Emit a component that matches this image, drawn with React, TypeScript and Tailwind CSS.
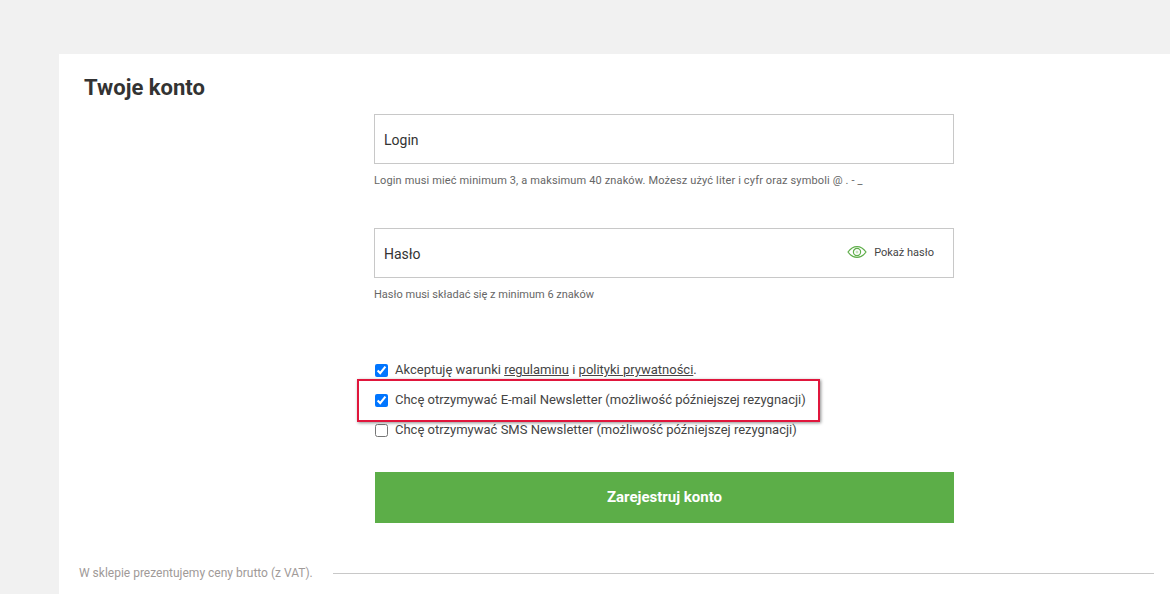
import { useState } from 'react';

function EyeIcon() {
  return (
    <svg className="-translate-y-px" width="20" height="14" viewBox="0 0 20 14" fill="none" stroke="#5fae4a" strokeWidth="1.2">
      <path d="M1 7C3.5 3.4 6.5 1.6 10 1.6S16.5 3.4 19 7C16.5 10.6 13.500 12.400 10 12.400S3.500 10.600 1 7Z" />
      <circle cx="10" cy="7" r="3.6" />
      <circle cx="10" cy="7" r="1.5" fill="#5fae4a" fillOpacity="0.35" stroke="none" />
    </svg>
  );
}

function CheckRow({ defaultChecked, children }: { defaultChecked?: boolean; children: React.ReactNode }) {
  return (
    <label className="flex h-[30px] items-center text-[13px] text-[#444]">
      <input type="checkbox" defaultChecked={defaultChecked} className="ml-px mr-[7px] h-[13px] w-[13px]" />
      <span>{children}</span>
    </label>
  );
}

export default function App() {
  const [login, setLogin] = useState('');
  const [password, setPassword] = useState('');
  const [showPassword, setShowPassword] = useState(false);

  const inputClasses =
    'h-[50px] w-full border border-[#c8c8c8] bg-white px-[9px] pt-[2px] text-[14px] text-[#333] outline-none placeholder:text-[#333]';

  return (
    <div className="h-[594px] overflow-hidden bg-[#f1f1f1] pl-[59px] pt-[54px] font-['Roboto',sans-serif]">
      <div className="h-[540px] bg-white">
        <h1 className="pl-[25px] pt-[20px] text-[22px] font-bold leading-[28px] text-[#333]">Twoje konto</h1>

        <form className="ml-[315px] mt-[12px] w-[580px]">
          <input
            className={inputClasses}
            placeholder="Login"
            value={login}
            onChange={(e) => setLogin(e.target.value)}
          />
          <p className="mt-[10px] text-[11px] leading-[13px] tracking-[0.14px] text-[#666]">
            Login musi mieć minimum 3, a maksimum 40 znaków. Możesz użyć liter i cyfr oraz symboli @ . - _
          </p>

          <div className="relative mt-[41px]">
            <input
              className={inputClasses}
              type={showPassword ? 'text' : 'password'}
              placeholder="Hasło"
              value={password}
              onChange={(e) => setPassword(e.target.value)}
            />
            <button
              type="button"
              onClick={() => setShowPassword(!showPassword)}
              className="absolute right-[20px] top-[18px] flex items-center gap-[7px] text-[11px] leading-[14px] text-[#444]"
            >
              <EyeIcon /> Pokaż hasło
            </button>
          </div>
          <p className="mt-[10px] text-[11px] leading-[13px] text-[#666]">Hasło musi składać się z minimum 6 znaków</p>

          <div className="relative mt-[54px]">
            <CheckRow defaultChecked>
              Akceptuję warunki <a className="underline">regulaminu</a> i <a className="underline">polityki prywatności</a>.
            </CheckRow>
            <CheckRow defaultChecked>Chcę otrzymywać E-mail Newsletter (możliwość późniejszej rezygnacji)</CheckRow>
            <CheckRow>Chcę otrzymywać SMS Newsletter (możliwość późniejszej rezygnacji)</CheckRow>
            <div className="pointer-events-none absolute left-[-17px] top-[24px] h-[43px] w-[463px] border-2 border-[#e0163c] shadow-[1px_1px_3px_rgba(0,0,0,0.45)]" />
          </div>

          <button
            type="button"
            className="mt-[27px] ml-px h-[51px] w-[579px] bg-[#5cae48] text-[15px] font-bold text-white"
          >
            Zarejestruj konto
          </button>
        </form>

        <div className="mt-[42px] flex items-center pl-[20px] pr-[16px]">
          <span className="text-[12px] leading-[16px] text-[#a09a98]">W sklepie prezentujemy ceny brutto (z VAT).</span>
          <div className="ml-[20px] h-px flex-1 bg-[#c8c8c8]" />
        </div>
      </div>
    </div>
  );
}
